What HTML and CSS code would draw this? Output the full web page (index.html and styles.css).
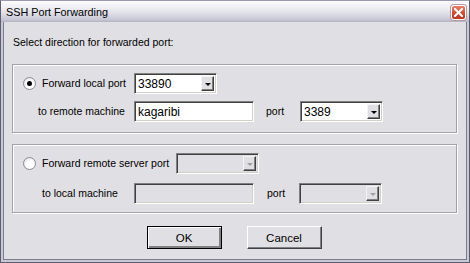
FILE: index.html
```html
<!DOCTYPE html>
<html lang="en">
  <head>
    <meta charset="UTF-8" />
    <title>SSH Port Forwarding</title>
    <link rel="stylesheet" href="styles.css">
  </head>
  <body>
    <div class="window">
      <div class="titlebar">
        <span class="title">SSH Port Forwarding</span>
        <span class="close">
          <svg width="9" height="9" viewBox="0 0 9 9">
            <path d="M1 1 L8 8 M8 1 L1 8" stroke="#fff" stroke-width="2" stroke-linecap="square" />
          </svg>
        </span>
      </div>

      <div class="client">
        <p class="prompt">Select direction for forwarded port:</p>

        <div class="group">
          <div class="row">
            <span class="radio checked"></span>
            <label class="lbl w-local">Forward local port</label>
            <div class="combo">
              <span class="value">33890</span>
              <span class="drop"><i></i></span>
            </div>
          </div>
          <div class="row row-remote">
            <label class="lbl w-remote">to remote machine</label>
            <div class="field">kagaribi</div>
            <label class="lbl port">port</label>
            <div class="combo">
              <span class="value">3389</span>
              <span class="drop"><i></i></span>
            </div>
          </div>
        </div>

        <div class="group group-off">
          <div class="row">
            <span class="radio"></span>
            <label class="lbl w-server">Forward remote server port</label>
            <div class="combo disabled">
              <span class="value"></span>
              <span class="drop"><i></i></span>
            </div>
          </div>
          <div class="row row-local">
            <label class="lbl w-localm">to local machine</label>
            <div class="field disabled"></div>
            <label class="lbl port">port</label>
            <div class="combo disabled">
              <span class="value"></span>
              <span class="drop"><i></i></span>
            </div>
          </div>
        </div>

        <div class="buttons">
          <button class="btn default">OK</button>
          <button class="btn">Cancel</button>
        </div>
      </div>
    </div>
  </body>
</html>
```

FILE: styles.css
```css
* {
  margin: 0;
  padding: 0;
  box-sizing: border-box;
}

body {
  width: 470px;
  height: 263px;
  overflow: hidden;
  font-family: "Liberation Sans", Arial, sans-serif;
  font-size: 11px;
  color: #000;
  background: #e0dfe3;
}

.window {
  height: 263px;
  display: flex;
  flex-direction: column;
  border: 1px solid #5e5e72;
  border-top-color: #9a9aac;
  background: #c9c9d6;
}

.titlebar {
  height: 21px;
  display: flex;
  align-items: center;
  justify-content: space-between;
  padding: 0 3px 0 5px;
  background: linear-gradient(
    to bottom,
    #fcfcfd 0%,
    #efeff4 30%,
    #dedee7 60%,
    #c8c8d5 88%,
    #b3b3c3 100%
  );
}

.title {
  line-height: 13px;
  margin-top: 1px;
  font-size: 10.8px;
}

.close {
  width: 15px;
  height: 15px;
  margin-top: 2px;
  display: flex;
  align-items: center;
  justify-content: center;
  border: 1px solid #fff;
  border-radius: 3px;
  background: linear-gradient(to bottom, #e8806a, #cc4a30 60%, #b83a22);
  box-shadow: 0 0 0 1px #b89a9a;
}

.client {
  flex: 1;
  margin: 0 2px 2px;
  border: 1px solid #7c7c90;
  border-top: none;
  background: #e0dfe3;
  padding: 14px 9px 0 8px;
}

.prompt {
  line-height: 13px;
  margin-left: 1px;
  font-size: 10.5px;
}

.group {
  margin-top: 15px;
  height: 69px;
  border: 1px solid #a2a2a8;
  box-shadow: inset 1px 1px 0 #fff, 1px 1px 0 #fff;
  padding-top: 8px;
  display: flex;
  flex-direction: column;
  gap: 7px;
}

.group-off {
  margin-top: 11px;
  gap: 9px;
}

.row {
  display: flex;
  align-items: center;
  height: 21px;
  padding-left: 10px;
}

.row-remote {
  padding-left: 25px;
}

.row-local {
  padding-left: 29px;
}

.lbl {
  line-height: 13px;
  white-space: nowrap;
  font-size: 10.5px;
}

.w-local {
  margin-left: 6px;
  width: 92px;
}

.w-server {
  margin-left: 6px;
  width: 134px;
}

.w-remote {
  width: 96px;
}

.w-localm {
  width: 92px;
}

.port {
  margin-left: 12px;
  width: 34px;
}

.row-local .port {
  margin-left: 13px;
  width: 32px;
}

.radio {
  width: 13px;
  height: 13px;
  border-radius: 50%;
  border: 1px solid #8c8c94;
  background: radial-gradient(circle at 60% 60%, #fff 40%, #d4d4dc 100%);
  display: flex;
  align-items: center;
  justify-content: center;
}

.radio.checked::after {
  content: "";
  width: 5px;
  height: 5px;
  border-radius: 50%;
  background: #000;
}

.field,
.combo {
  height: 21px;
  border: 1px solid;
  border-color: #808080 #fff #fff #808080;
  box-shadow: inset 1px 1px 0 #404040, inset -1px -1px 0 #d4d0c8;
  background: #fff;
}

.field {
  width: 120px;
  padding: 3px 0 0 3px;
  font-size: 12px;
  line-height: 14px;
}

.combo {
  width: 83px;
  display: flex;
  align-items: stretch;
  padding: 2px;
}

.combo .value {
  flex: 1;
  padding: 1px 0 0 1px;
  font-size: 12px;
  line-height: 14px;
}

.drop {
  width: 13px;
  display: flex;
  align-items: center;
  justify-content: center;
  background: #e0dfe3;
  border: 1px solid;
  border-color: #f4f4f4 #404040 #404040 #f4f4f4;
  box-shadow: inset -1px -1px 0 #808080;
}

.drop i {
  width: 0;
  height: 0;
  margin-top: 1px;
  border-left: 3px solid transparent;
  border-right: 3px solid transparent;
  border-top: 3px solid #000;
}

.disabled {
  background: #e0dfe3;
}

.disabled .drop i {
  border-top-color: #a0a0a0;
}

.buttons {
  margin-top: 13px;
  display: flex;
  justify-content: center;
  gap: 25px;
  padding-right: 1px;
}

.btn {
  width: 75px;
  height: 23px;
  font-family: "Liberation Sans", Arial, sans-serif;
  font-size: 11.5px;
  color: #000;
  background: #e0dfe3;
  border: 1px solid;
  border-color: #fff #404040 #404040 #fff;
  box-shadow: inset -1px -1px 0 #808080;
}

.btn.default {
  border: 1px solid #000;
  box-shadow: inset 1px 1px 0 #fff, inset -2px -2px 0 #808080;
}
```
